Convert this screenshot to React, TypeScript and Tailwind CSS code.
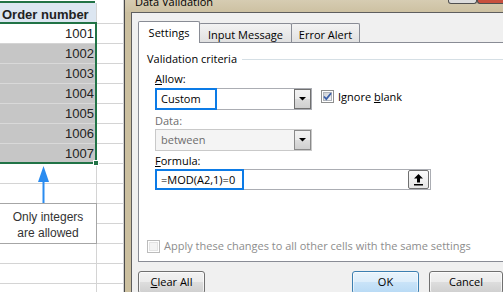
import React from "react";

const nums = ["1001", "1002", "1003", "1004", "1005", "1006", "1007"];

function DropBtn({ disabled }: { disabled?: boolean }) {
  return (
    <div
      className={
        disabled
          ? "ml-auto w-[17px] h-full flex items-center justify-center border border-[#8a8a8a] bg-[linear-gradient(to_bottom,#f2f2f2_0%,#ebebeb_50%,#dddddd_50%,#cfcfcf_100%)]"
          : "ml-auto w-[17px] h-full flex items-center justify-center border border-[#707070] bg-[linear-gradient(to_bottom,#f2f2f2_0%,#ebebeb_50%,#dddddd_50%,#cfcfcf_100%)]"
      }
    >
      <svg width="7" height="4" viewBox="0 0 7 4">
        <polygon points="0,0 7,0 3.5,3.5" fill="#000" />
      </svg>
    </div>
  );
}

function Sheet() {
  return (
    <div className="flex w-[124px] h-[292px] shrink-0 font-['Liberation_Sans',Arial,sans-serif] text-[13px] text-[#222]">
      {/* column A */}
      <div className="w-[97px] flex flex-col">
        <div className="h-[1px]" />
        <div className="h-[2px] w-[95px] bg-[#217346]" />
        <div className="h-[19px] bg-[#dce6f1] border-r border-[#d4d4d4] flex items-center pl-[2px] pt-[4px] font-bold whitespace-nowrap">
          Order number
        </div>
        <div className="relative border-t-2 border-r-2 border-b-2 border-[#217346]">
          {nums.map((n, i) => (
            <div
              key={n}
              className={
                i === 0
                  ? "h-[20px] border-b border-[#d4d4d4] bg-white flex items-center justify-end pr-[1px] pt-[1px]"
                  : i === 6
                  ? "h-[18px] bg-[#c6c6c6] flex items-center justify-end pr-[1px] pt-[1px]"
                  : "h-[20px] border-b border-[#d9d9d9] bg-[#c6c6c6] flex items-center justify-end pr-[1px] pt-[1px]"
              }
            >
              {n}
            </div>
          ))}
          <div className="absolute z-10 right-[-4px] bottom-[-4px] w-[6px] h-[6px] bg-[#217346] border border-white" />
        </div>
        <div className="relative">
          <div className="h-[20px] border-b border-r border-[#d4d4d4]" />
          <div className="h-[19px] border-r border-[#d4d4d4]" />
          <svg className="absolute left-0 top-0" width="97" height="39" viewBox="0 0 97 39">
            <polygon points="43.5,2 38,18 49,18" fill="#2a8cf0" />
            <rect x="42.5" y="16" width="2" height="23" fill="#2a8cf0" />
          </svg>
        </div>
        <div className="h-[41px] border-t border-b border-r border-[#a6a6a6] flex flex-col items-center justify-center pt-[2px] text-[12px] leading-[16px] text-[#333]">
          <div>Only integers</div>
          <div>are allowed</div>
        </div>
        <div className="h-[20px] border-b border-r border-[#d4d4d4]" />
        <div className="h-[20px] border-b border-r border-[#d4d4d4]" />
        <div className="flex-1 border-r border-[#d4d4d4]" />
      </div>
      {/* column B */}
      <div className="w-[27px] flex flex-col border-r border-[#d4d4d4]">
        <div className="h-[24px] border-b border-[#d4d4d4]" />
        {Array.from({ length: 13 }).map((_, i) => (
          <div key={i} className="h-[20px] border-b border-[#d4d4d4]" />
        ))}
        <div className="flex-1" />
      </div>
    </div>
  );
}

function CheckBox({ checked, disabled }: { checked?: boolean; disabled?: boolean }) {
  return (
    <div
      className={
        disabled
          ? "w-[13px] h-[13px] shrink-0 border border-[#bcbcbc] bg-white p-[1px]"
          : "w-[13px] h-[13px] shrink-0 border border-[#8e8f8f] bg-white p-[1px]"
      }
    >
      <div
        className={
          disabled
            ? "w-full h-full bg-[#f4f4f4] border border-[#e4e4e4]"
            : "w-full h-full relative bg-[linear-gradient(135deg,#cbcfd5,#f6f6f6)] border border-[#b0b4bb]"
        }
      >
        {checked && (
          <svg className="absolute left-[-2px] top-[-2px]" width="11" height="11" viewBox="0 0 11 11">
            <path d="M2 5.5 L4.3 8 L9 2.2" stroke="#3b5fa8" strokeWidth="1.8" fill="none" />
          </svg>
        )}
      </div>
    </div>
  );
}

function Dialog() {
  return (
    <div className="flex-1 min-w-0 h-[292px] flex flex-col border-l border-[#4a4a4a] bg-[#cbbf9f] font-['Open_Sans',sans-serif] text-[11px] text-black">
      <div className="h-[12px] shrink-0 flex overflow-hidden bg-[linear-gradient(to_bottom,#d6ccb2,#cdc1a2)]">
        <div className="pl-[10px] mt-[-6px] leading-[15px] whitespace-nowrap">Data Validation</div>
        <div className="ml-auto flex self-start">
          <div className="w-[29px] h-[4px] bg-[#dcdcdc] border border-t-0 border-[#505050] rounded-bl-[3px] rounded-br-[3px]" />
          <div className="w-[26px] h-[4px] bg-[#c8503f] border border-t-0 border-r-0 border-[#505050] rounded-bl-[3px]" />
        </div>
      </div>
      <div className="flex-1 ml-[6px] border-l border-t border-[#5e5e5e] bg-[#f0f0f0] pl-[6px] pt-[8px] flex flex-col">
        {/* tabs */}
        <div className="flex items-end h-[22px] shrink-0">
          <div className="relative z-10 w-[62px] h-[22px] bg-white border border-b-0 border-[#898c95] rounded-t-[2px] flex items-center justify-center pt-[1px] leading-[14px]">
            Settings
          </div>
          <div className="-ml-px w-[93px] h-[20px] border border-b-0 border-[#898c95] rounded-t-[2px] bg-[linear-gradient(to_bottom,#f3f3f3,#e0e0e0)] flex items-center justify-center pt-[2px] leading-[14px]">
            Input Message
          </div>
          <div className="-ml-px w-[69px] h-[20px] border border-b-0 border-[#898c95] rounded-t-[2px] bg-[linear-gradient(to_bottom,#f3f3f3,#e0e0e0)] flex items-center justify-center pt-[2px] leading-[14px]">
            Error Alert
          </div>
        </div>
        {/* panel */}
        <div className="-mt-px w-[400px] h-[220px] shrink-0 border border-[#898c95] bg-white flex flex-col pl-[8px] leading-[14px]">
          <div className="mt-[9px] h-[14px] flex items-center">
            <span className="whitespace-nowrap">Validation criteria</span>
            <div className="flex-1 h-px bg-[#d5dfe5] ml-[5px]" />
          </div>
          <div className="pl-[8px] flex flex-col">
            <div className="mt-[6px] h-[14px] flex items-center">
              <span>
                <span className="underline underline-offset-[1px]">A</span>llow:
              </span>
            </div>
            <div className="mt-[2px] flex items-start">
              <div className="relative w-[157px] h-[22px] border border-[#abadb3] bg-white flex items-center">
                <div className="pl-[5px]">Custom</div>
                <DropBtn />
                <div className="absolute left-[-1px] top-[-1px] bottom-[-1px] w-[62px] border-2 border-[#0c7be6]" />
              </div>
              <div className="ml-[9px] mt-[2px] flex items-center gap-[4px] h-[13px]">
                <CheckBox checked />
                <span className="whitespace-nowrap">
                  Ignore <span className="underline underline-offset-[1px]">b</span>lank
                </span>
              </div>
            </div>
            <div className="mt-[4px] h-[14px] flex items-center text-[#6d6d6d]">Data:</div>
            <div className="mt-[1px] w-[157px] h-[22px] border border-[#c9c9c9] bg-[#f4f4f4] flex items-center text-[#6d6d6d]">
              <div className="pl-[5px]">between</div>
              <DropBtn disabled />
            </div>
            <div className="mt-[3px] h-[14px] flex items-center">
              <span>
                <span className="underline underline-offset-[1px]">F</span>ormula:
              </span>
            </div>
            <div className="mt-[1px] relative w-[276px] h-[21px] border border-[#abadb3] bg-white flex items-center">
              <div className="pl-[5px] whitespace-nowrap">=MOD(A2,1)=0</div>
              <div className="ml-auto mr-[1px] w-[21px] h-[19px] border border-[#707070] rounded-[2px] bg-[linear-gradient(to_bottom,#fbfbfb,#e6e6e6)] flex items-center justify-center">
                <svg width="9" height="12" viewBox="0 0 9 12">
                  <polygon points="4.5,0 0,4.5 3,4.5 3,8.5 6,8.5 6,4.5 9,4.5" fill="#000" />
                  <rect x="0" y="10" width="9" height="1.5" fill="#000" />
                </svg>
              </div>
              <div className="absolute left-[-1px] top-[-1px] bottom-[-1px] w-[89px] border-2 border-[#0c7be6]" />
            </div>
          </div>
          <div className="mt-[49px] flex items-center gap-[4px] text-[#8d8d8d]">
            <CheckBox disabled />
            <span className="whitespace-nowrap">Apply these changes to all other cells with the same settings</span>
          </div>
        </div>
        {/* buttons */}
        <div className="mt-[9px] flex shrink-0">
          <div className="w-[74px] h-[23px] rounded-[3px] border border-[#707070] bg-[linear-gradient(to_bottom,#f2f2f2_0%,#ebebeb_50%,#dddddd_50%,#cfcfcf_100%)] shadow-[inset_0_0_0_1px_rgba(255,255,255,0.7)] flex items-center justify-center">
            <span>
              <span className="underline underline-offset-[1px]">C</span>lear All
            </span>
          </div>
          <div className="ml-[147px] w-[74px] h-[23px] rounded-[3px] border border-[#3c7fb1] bg-[linear-gradient(to_bottom,#e9f4fc_0%,#dcedfb_50%,#c9e3f8_50%,#b8daf5_100%)] shadow-[inset_0_0_0_1px_rgba(255,255,255,0.6)] flex items-center justify-center">
            OK
          </div>
          <div className="ml-[10px] w-[74px] h-[23px] shrink-0 rounded-[3px] border border-[#707070] bg-[linear-gradient(to_bottom,#f2f2f2_0%,#ebebeb_50%,#dddddd_50%,#cfcfcf_100%)] shadow-[inset_0_0_0_1px_rgba(255,255,255,0.7)] flex items-center justify-center">
            Cancel
          </div>
        </div>
      </div>
    </div>
  );
}

export default function App() {
  return (
    <div className="flex w-[503px] h-[292px] overflow-hidden bg-white">
      <Sheet />
      <Dialog />
    </div>
  );
}
